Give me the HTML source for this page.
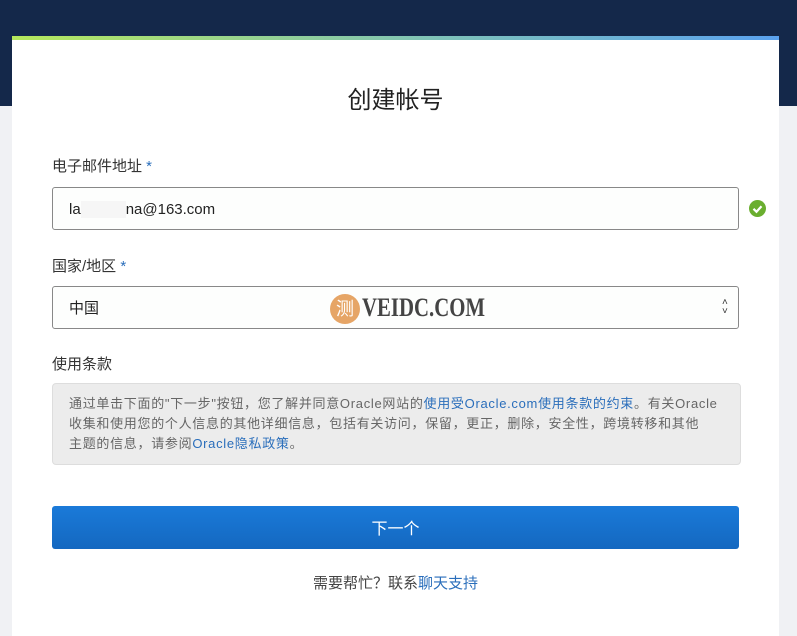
<!DOCTYPE html>
<html><head><meta charset="utf-8"><style>
body{margin:0;width:797px;height:620px;overflow:hidden;background:#f0f1f4;font-family:"Liberation Sans","Noto Sans CJK SC",sans-serif;position:relative}
.top{position:absolute;left:0;top:0;width:797px;height:106px;background:#14284a}
.card{position:absolute;left:12px;top:36px;width:767px;height:600px;background:#fff}
.strip{position:absolute;left:0;top:0;width:100%;height:4px;background:linear-gradient(90deg,#b6e85c,#7fc3b8 55%,#5aa2ef)}
.a{position:absolute}
h1{position:absolute;left:0;width:100%;top:44px;margin:0;text-align:center;font-size:24px;font-weight:normal;color:#222}
.lbl{font-size:15px;color:#333;left:40px}
.lbl i{color:#2a6ebb;font-style:normal}
.inp{left:40px;width:685px;height:41px;border:1px solid #888;border-radius:3px;background:#fdfefd;font-size:15px;color:#222;line-height:44px;text-indent:16px}
.terms{left:40px;top:347px;width:655px;height:60px;padding:10px 16px;background:#ececec;border:1px solid #ddd;border-radius:4px;font-size:13px;line-height:20px;color:#666;letter-spacing:0.7px;white-space:nowrap;overflow:hidden}
.terms b{font-weight:normal;color:#2a6ebb}
.btn{left:40px;top:470px;width:687px;height:43px;background:linear-gradient(#1a7ad9,#1468c0);border-radius:3px;color:#fff;font-size:16px;text-align:center;line-height:48px}
.help{left:0;width:100%;top:536px;text-align:center;font-size:15px;color:#444}
.help b{font-weight:normal;color:#2a6ebb}
</style></head><body>
<div class="top"></div>
<div class="card"><div class="strip"></div>
<h1>创建帐号</h1>
<div class="a lbl" style="top:119px">电子邮件地址 <i>*</i></div>
<div class="a inp" style="top:151px">la<span style="background:#f6f6f6;color:#f6f6f6">xxxxxx</span>na@163.com</div>
<svg class="a" style="left:737px;top:164px" width="17" height="17"><circle cx="8.5" cy="8.5" r="8.5" fill="#6aae2f"/><path d="M4.5 8.8l3 3 5-5.5" stroke="#fff" stroke-width="2.2" fill="none"/></svg>
<div class="a lbl" style="top:219px">国家/地区 <i>*</i></div>
<div class="a inp" style="top:250px;line-height:43px">中国</div>
<div class="a" style="left:318px;top:258px;width:30px;height:30px;border-radius:50%;background:#e6a566;color:#fff;font-size:18px;text-align:center;line-height:30px">测</div>
<div class="a" style="left:350px;top:257px;font-size:26px;font-weight:bold;color:#444;font-family:'Liberation Serif',serif;transform:scaleX(.8);transform-origin:left">VEIDC.COM</div>
<div class="a" style="left:710px;top:262px;font-size:10px;line-height:9px;color:#333">˄<br>˅</div>
<div class="a lbl" style="top:317px">使用条款</div>
<div class="a terms">通过单击下面的"下一步"按钮，您了解并同意Oracle网站的<b>使用受Oracle.com使用条款的约束</b>。有关Oracle<br>收集和使用您的个人信息的其他详细信息，包括有关访问，保留，更正，删除，安全性，跨境转移和其他<br>主题的信息，请参阅<b>Oracle隐私政策</b>。</div>
<div class="a btn">下一个</div>
<div class="a help">需要帮忙？联系<b>聊天支持</b></div>
</div>
</body></html>
